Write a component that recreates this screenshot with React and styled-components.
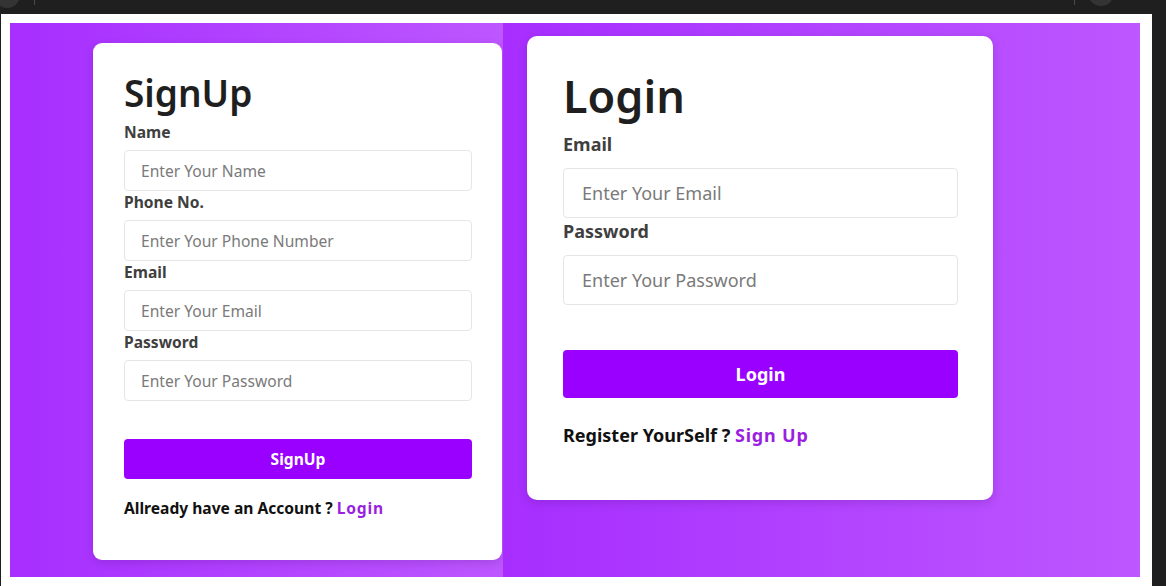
import React from "react";
import styled, { createGlobalStyle } from "styled-components";

const GlobalStyle = createGlobalStyle`
  * { box-sizing: border-box; }
  html, body { margin: 0; padding: 0; background: #1f1f1f; }
  body { font-family: "Noto Sans", "Open Sans", sans-serif; }
`;

const Screen = styled.div`
  position: relative;
  width: 1166px;
  height: 586px;
  background: #1f1f1f;
  display: flex;
  flex-direction: column;
  overflow: hidden;
`;

const TopBar = styled.div`
  height: 14px;
  flex-shrink: 0;
`;

const Knob = styled.div`
  position: absolute;
  top: ${(p) => p.top}px;
  left: ${(p) => p.left}px;
  width: ${(p) => p.size}px;
  height: ${(p) => p.size}px;
  border-radius: 50%;
  background: #343434;
`;

const Tick = styled.div`
  position: absolute;
  top: 0;
  left: ${(p) => p.left}px;
  width: 1px;
  height: 5px;
  background: #4a4a4a;
`;

const Body = styled.div`
  flex: 1;
  display: flex;
  padding-left: 1px;
  padding-right: 14px;
`;

const Frame = styled.div`
  flex: 1;
  background: #ffffff;
  padding: 9px 12px 9px 9px;
  display: flex;
`;

const Panel = styled.div`
  width: ${(p) => p.width}px;
  background: linear-gradient(to right, #a72eff, #bd57ff);
  padding: ${(p) => p.pad};
  display: flex;
  align-items: flex-start;
`;

const Card = styled.div`
  width: ${(p) => p.width}px;
  background: #ffffff;
  border-radius: ${(p) => p.radius}px;
  box-shadow: 0 3px 10px rgba(60, 0, 90, 0.18);
  padding: ${(p) => p.pad};
  display: flex;
  flex-direction: column;
`;

const Title = styled.h1`
  margin: 0;
  font-size: ${(p) => p.size}px;
  line-height: ${(p) => p.lh}px;
  font-weight: 600;
  color: #1f1f1f;
  margin-bottom: ${(p) => p.mb}px;
`;

const Field = styled.div`
  display: flex;
  flex-direction: column;
`;

const Label = styled.label`
  font-size: ${(p) => p.size}px;
  line-height: ${(p) => p.lh}px;
  font-weight: 700;
  color: #3f3f3f;
  margin-top: ${(p) => p.mt}px;
  margin-bottom: ${(p) => p.mb}px;
`;

const Input = styled.input`
  height: ${(p) => p.h}px;
  width: 100%;
  border: 1px solid #e6e6e6;
  border-radius: 4px;
  padding: 0 ${(p) => p.px}px;
  font-family: inherit;
  font-size: ${(p) => p.size}px;
  color: #333;
  outline: none;
  &::placeholder {
    color: #7a7a7a;
  }
`;

const Button = styled.button`
  height: ${(p) => p.h}px;
  width: 100%;
  border: none;
  border-radius: 4px;
  background: #9900ff;
  color: #ffffff;
  font-family: inherit;
  font-weight: 700;
  font-size: ${(p) => p.size}px;
  margin-top: ${(p) => p.mt}px;
  cursor: pointer;
`;

const Footer = styled.p`
  margin: ${(p) => p.mt}px 0 0;
  font-size: ${(p) => p.size}px;
  line-height: ${(p) => p.lh}px;
  font-weight: 700;
  color: #111;
`;

const LinkText = styled.a`
  color: #9a1fe0;
  letter-spacing: 0.8px;
  text-decoration: none;
`;

const signupFields = [
  { label: "Name", ph: "Enter Your Name" },
  { label: "Phone No.", ph: "Enter Your Phone Number" },
  { label: "Email", ph: "Enter Your Email" },
  { label: "Password", ph: "Enter Your Password" },
];

const loginFields = [
  { label: "Email", ph: "Enter Your Email" },
  { label: "Password", ph: "Enter Your Password" },
];

export default function App() {
  return (
    <>
      <GlobalStyle />
      <Screen>
        <TopBar />
        <Knob top={-18} left={-6} size={26} />
        <Tick left={34} />
        <Tick left={1074} />
        <Knob top={-20} left={1088} size={26} />
        <Body>
          <Frame>
            <Panel width={493} pad="20px 1px 0 83px">
              <Card width={409} radius={9} pad="26px 30px 42px 31px">
                <Title size={37} lh={48} mb={4}>SignUp</Title>
                {signupFields.map((f) => (
                  <Field key={f.label}>
                    <Label size={15.6} lh={20} mt={1} mb={8}>{f.label}</Label>
                    <Input h={41} px={16} size={15.6} placeholder={f.ph} />
                  </Field>
                ))}
                <Button h={40} size={15.6} mt={38}>SignUp</Button>
                <Footer size={15.6} lh={20} mt={19}>
                  Allready have an Account ? <LinkText href="#">Login</LinkText>
                </Footer>
              </Card>
            </Panel>
            <Panel width={637} pad="13px 0 0 24px">
              <Card width={466} radius={10} pad="30px 35px 53px 36px">
                <Title size={45} lh={60} mb={5}>Login</Title>
                {loginFields.map((f) => (
                  <Field key={f.label}>
                    <Label size={18} lh={24} mt={1} mb={12}>{f.label}</Label>
                    <Input h={50} px={18} size={18} placeholder={f.ph} />
                  </Field>
                ))}
                <Button h={48} size={18} mt={45}>Login</Button>
                <Footer size={18} lh={24} mt={25}>
                  Register YourSelf ? <LinkText href="#">Sign Up</LinkText>
                </Footer>
              </Card>
            </Panel>
          </Frame>
        </Body>
      </Screen>
    </>
  );
}
